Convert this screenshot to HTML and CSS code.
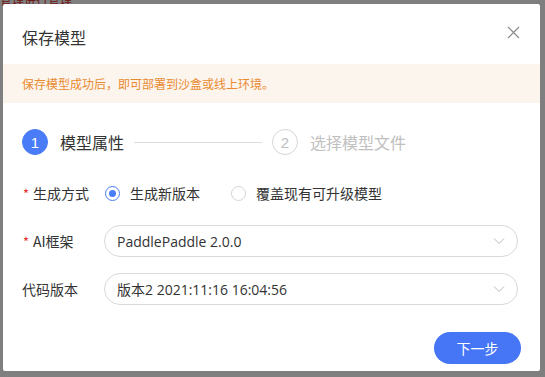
FILE: index.html
```html
<!DOCTYPE html>
<html lang="zh-CN">
<head>
  <meta charset="UTF-8">
  <title>保存模型</title>
  <link rel="stylesheet" href="styles.css">
</head>
<body>
  <!-- page behind the mask -->
  <div class="page-behind">管理进行管理</div>

  <div class="mask">
    <div class="dialog">
      <div class="dialog-header">
        <span class="dialog-title">保存模型</span>
        <span class="dialog-close">
          <svg width="13" height="13" viewBox="0 0 13 13"><path d="M1 1L12 12M12 1L1 12" stroke="#8a8a8a" stroke-width="1.2" fill="none"/></svg>
        </span>
      </div>

      <div class="notice">保存模型成功后，即可部署到沙盒或线上环境。</div>

      <div class="dialog-body">
        <!-- steps -->
        <div class="steps">
          <div class="step active">
            <span class="step-num">1</span>
            <span class="step-title">模型属性</span>
          </div>
          <div class="step-line"></div>
          <div class="step">
            <span class="step-num">2</span>
            <span class="step-title">选择模型文件</span>
          </div>
        </div>

        <!-- form -->
        <div class="form-row">
          <label class="form-label required">生成方式</label>
          <div class="radio-group">
            <span class="radio checked"><i></i>生成新版本</span>
            <span class="radio"><i></i>覆盖现有可升级模型</span>
          </div>
        </div>
        <div class="form-row">
          <label class="form-label required">AI框架</label>
          <div class="select">
            <span>PaddlePaddle 2.0.0</span>
            <svg width="12" height="8" viewBox="0 0 12 8"><path d="M1 1.5L6 6.5L11 1.5" stroke="#bbb" stroke-width="1" fill="none"/></svg>
          </div>
        </div>
        <div class="form-row">
          <label class="form-label">代码版本</label>
          <div class="select">
            <span>版本2 2021:11:16 16:04:56</span>
            <svg width="12" height="8" viewBox="0 0 12 8"><path d="M1 1.5L6 6.5L11 1.5" stroke="#bbb" stroke-width="1" fill="none"/></svg>
          </div>
        </div>
      </div>

      <div class="dialog-footer">
        <button class="btn-primary">下一步</button>
      </div>
    </div>
  </div>
</body>
</html>
```

FILE: styles.css
```css
/* Global */
* { margin: 0; padding: 0; box-sizing: border-box; }
body {
  width: 545px;
  height: 377px;
  overflow: hidden;
  position: relative;
  background: #fff;
  font-family: "Noto Sans CJK SC", "Noto Sans", sans-serif;
  color: #333;
}

.page-behind {
  margin-top: -9px;
  font-size: 12px;
  color: #e03030;
}

/* grey mask over the page */
.mask {
  position: absolute;
  top: 0; left: 0; right: 0; bottom: 0;
  background: rgba(0, 0, 0, 0.5);
  padding: 4px 5px 6px 3px;
}

.dialog {
  background: #fff;
  width: 537px;
  height: 367px;
  border-radius: 2px;
  display: flex;
  flex-direction: column;
}

/* ---------- header ---------- */
.dialog-header {
  height: 60px;
  display: flex;
  align-items: center;
  justify-content: space-between;
  padding: 0 20px 0 19px;
}
.dialog-title {
  font-size: 16px;
  color: #333;
  margin-top: 6px;
}
.dialog-close { display: flex; margin-top: -3px; }

.notice {
  height: 39px;
  background: #fcf5ee;
  color: #ea8a2e;
  font-size: 12px;
  line-height: 39px;
  padding-left: 19px;
}

/* ---------- body ---------- */
.dialog-body {
  padding: 24px 22px 0 19px;
  flex: 1;
}

.steps {
  display: flex;
  align-items: center;
  height: 30px;
  margin-bottom: 20px;
}
.step {
  display: flex;
  align-items: center;
  color: #c0c0c0;
}
.step-num {
  width: 26px;
  height: 26px;
  border-radius: 50%;
  border: 1px solid #d6d6d6;
  display: flex;
  align-items: center;
  justify-content: center;
  font-size: 15px;
  font-family: "Liberation Sans", sans-serif;
}
.step-title {
  font-size: 16px;
  margin-left: 12px;
}
.step.active { color: #333; }
.step.active .step-num {
  background: #4a7cf7;
  border-color: #4a7cf7;
  color: #fff;
}
.step-line {
  width: 128px;
  height: 1px;
  background: #dcdcdc;
  margin: 0 10px 0 10px;
}

.form-row {
  display: flex;
  align-items: center;
  height: 32px;
  margin-bottom: 16px;
}
.form-row:first-of-type { margin-bottom: 15px; }
.form-label {
  width: 82px;
  font-size: 14px;
  color: #333;
  position: relative;
}
.form-label.required { padding-left: 11px; }
.form-label.required::before {
  content: "*";
  position: absolute;
  left: 1px;
  top: 1px;
  color: #e0312c;
  font-size: 13px;
}

.radio-group { display: flex; }
.radio {
  display: flex;
  align-items: center;
  font-size: 14px;
  margin-right: 30px;
}
.radio i {
  width: 15px;
  height: 15px;
  border-radius: 50%;
  border: 1px solid #d4d4d4;
  margin-right: 10px;
  margin-left: 1px;
  position: relative;
}
.radio.checked i { border-color: #4a7cf7; }
.radio.checked i::after {
  content: "";
  position: absolute;
  top: 3px; left: 3px;
  width: 7px; height: 7px;
  border-radius: 50%;
  background: #4a7cf7;
}

.select {
  flex: 1;
  height: 32px;
  border: 1px solid #d9d9d9;
  border-radius: 16px;
  display: flex;
  align-items: center;
  justify-content: space-between;
  padding: 0 12px 0 12px;
  font-size: 14px;
  color: #333;
  font-family: "Open Sans", "Noto Sans CJK SC", sans-serif;
}

/* ---------- footer ---------- */
.dialog-footer {
  display: flex;
  justify-content: flex-end;
  padding: 0 19px 7px 0;
}
.btn-primary {
  width: 87px;
  height: 32px;
  border: none;
  border-radius: 16px;
  background: #4676f6;
  color: #fff;
  font-size: 14px;
  font-family: "Noto Sans CJK SC", sans-serif;
}
```
